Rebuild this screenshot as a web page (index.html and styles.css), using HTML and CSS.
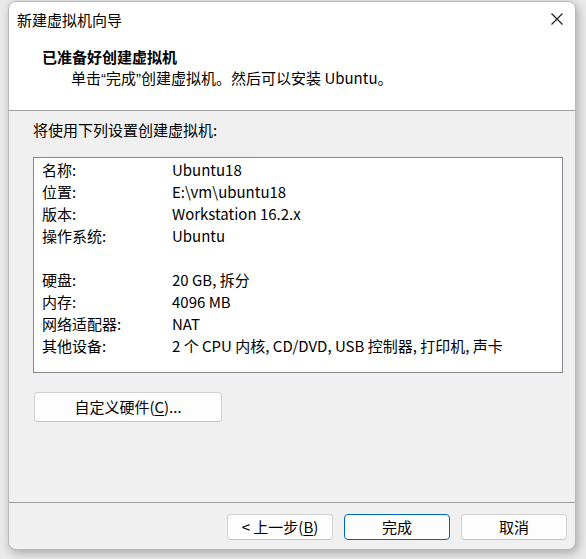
FILE: index.html
```html
<!DOCTYPE html>
<html lang="zh-CN">
<head>
<meta charset="utf-8">
<title>新建虚拟机向导</title>
<link rel="stylesheet" href="styles.css">
</head>
<body>
<div class="window">
  <div class="header">
    <div class="titlebar">
      <span class="title">新建虚拟机向导</span>
      <span class="close" aria-label="关闭">
        <svg width="12" height="12" viewBox="0 0 12 12"><path d="M0.5 0.5 L11.5 11.5 M11.5 0.5 L0.5 11.5" stroke="#1a1a1a" stroke-width="1.1" fill="none"/></svg>
      </span>
    </div>
    <div class="heading">
      <div class="heading-title">已准备好创建虚拟机</div>
      <div class="heading-sub">单击<span class="quote">“</span>完成<span class="quote">”</span>创建虚拟机。然后可以安装 Ubuntu。</div>
    </div>
  </div>
  <div class="content">
    <div class="intro">将使用下列设置创建虚拟机:</div>
    <div class="listbox">
      <div class="row"><span>名称:</span><span>Ubuntu18</span></div>
      <div class="row"><span>位置:</span><span>E:\vm\ubuntu18</span></div>
      <div class="row"><span>版本:</span><span>Workstation 16.2.x</span></div>
      <div class="row"><span>操作系统:</span><span>Ubuntu</span></div>
      <div class="row empty"><span></span><span></span></div>
      <div class="row"><span>硬盘:</span><span>20 GB, 拆分</span></div>
      <div class="row"><span>内存:</span><span>4096 MB</span></div>
      <div class="row"><span>网络适配器:</span><span>NAT</span></div>
      <div class="row"><span>其他设备:</span><span>2 个 CPU 内核, CD/DVD, USB 控制器, 打印机, 声卡</span></div>
    </div>
    <button class="btn custom">自定义硬件(<u>C</u>)...</button>
  </div>
  <div class="footer">
    <button class="btn">&lt; 上一步(<u>B</u>)</button>
    <button class="btn default">完成</button>
    <button class="btn">取消</button>
  </div>
</div>
</body>
</html>
```

FILE: styles.css
```css
html, body {
  margin: 0;
  padding: 0;
}
body {
  background: #e9e9e9;
  width: 586px;
  height: 559px;
  overflow: hidden;
  padding: 1px 0 0 8px;
  box-sizing: border-box;
  font-family: "Noto Sans CJK SC", "Noto Sans", sans-serif;
  font-size: 15px;
  color: #000;
}
.window {
  width: 568px;
  height: 549px;
  box-sizing: border-box;
  border: 1px solid #b9b9b9;
  border-radius: 8px;
  overflow: hidden;
  background: #f0f0f0;
  display: flex;
  flex-direction: column;
  box-shadow: 2px 3px 10px rgba(0, 0, 0, 0.28);
}
.header {
  background: #fff;
  height: 108px;
  border-bottom: 1px solid #a0a0a0;
  flex: none;
}
.titlebar {
  height: 36px;
  display: flex;
  align-items: center;
  justify-content: space-between;
  padding: 0 12px 0 8px;
}
.title {
  font-size: 15px;
  line-height: 22px;
}
.close {
  display: flex;
  width: 12px;
  height: 12px;
  margin-top: -2px;
}
.heading {
  padding: 8px 0 0 33px;
}
.heading-title {
  font-weight: bold;
  line-height: 21px;
}
.heading-sub {
  line-height: 21px;
  padding-left: 29px;
}
.quote {
  font-family: "Liberation Sans", sans-serif;
}
.content {
  flex: 1;
  padding: 8px 12px 0 24px;
}
.intro {
  line-height: 22px;
}
.listbox {
  margin-top: 16px;
  height: 216px;
  box-sizing: border-box;
  background: #fff;
  border: 1px solid #828790;
  padding: 1px 8px 0 8px;
}
.row {
  display: grid;
  grid-template-columns: 130px 1fr;
  height: 22px;
  line-height: 22px;
  white-space: nowrap;
}
.btn {
  font-family: inherit;
  font-size: 15px;
  color: #000;
  background: #fdfdfd;
  border: 1px solid #d0d0d0;
  border-bottom-color: #c4c4c4;
  border-radius: 4px;
  padding: 0;
  line-height: 20px;
}
.btn u {
  text-underline-offset: 2px;
}
.custom {
  display: block;
  margin-top: 19px;
  margin-left: 1px;
  width: 188px;
  height: 30px;
}
.footer {
  flex: none;
  height: 47px;
  box-sizing: border-box;
  border-top: 1px solid #a0a0a0;
  padding: 11px 8px 0 0;
  display: flex;
  justify-content: flex-end;
  gap: 11px;
}
.footer .btn {
  width: 106px;
  height: 26px;
}
.footer .default {
  border: 1px solid #0067c0;
}
```
